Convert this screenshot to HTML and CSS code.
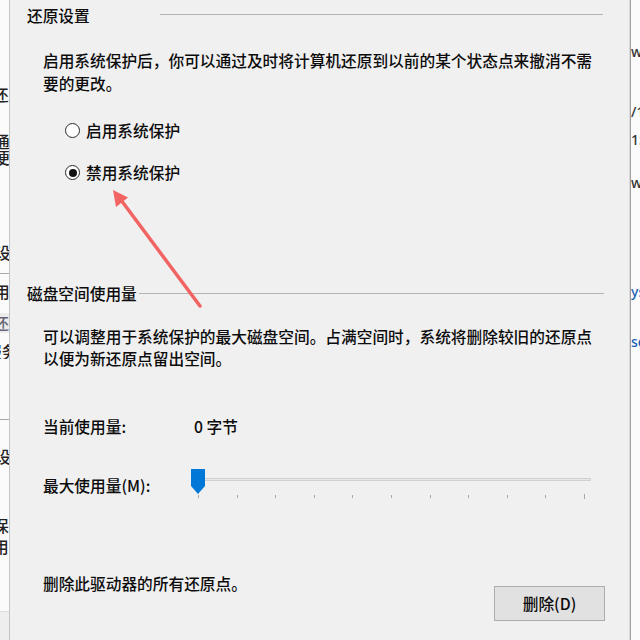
FILE: index.html
```html
<!DOCTYPE html>
<html lang="zh-CN">
<head>
<meta charset="utf-8">
<title>系统保护</title>
<link rel="stylesheet" href="styles.css">
</head>
<body>
<div class="screen">
  <div class="bg-left">
    <div class="frag fl1"><span>还原</span></div>
    <div class="frag fl2"><span>通</span></div>
    <div class="frag fl3"><span>便</span></div>
    <div class="frag fl4"><span>设置</span></div>
    <div class="hline hl1"></div>
    <div class="frag fl5"><span>用</span></div>
    <div class="gbox"><span>还</span></div>
    <div class="frag fl6"><span>服务</span></div>
    <div class="hline hl2"></div>
    <div class="frag fl7"><span>设置</span></div>
    <div class="frag fl8"><span>保创</span></div>
    <div class="frag fl9"><span>用创</span></div>
    <div class="band"></div>
  </div>

  <div class="dialog">
    <section class="group">
      <div class="group-head">
        <span class="group-title">还原设置</span>
        <span class="rule rule-1"></span>
      </div>
      <p class="desc">
        <span class="line">启用系统保护后，你可以通过及时将计算机还原到以前的某个状态点来撤消不需</span>
        <span class="line">要的更改。</span>
      </p>
      <div class="radio radio-1"><span class="circle"></span>启用系统保护</div>
      <div class="radio radio-2"><span class="circle checked"></span>禁用系统保护</div>
    </section>

    <section class="group group-2">
      <div class="group-head">
        <span class="group-title">磁盘空间使用量</span>
        <span class="rule rule-2"></span>
      </div>
      <p class="desc desc-2">
        <span class="line">可以调整用于系统保护的最大磁盘空间。占满空间时，系统将删除较旧的还原点</span>
        <span class="line">以便为新还原点留出空间。</span>
      </p>
      <div class="field usage">
        <span class="label">当前使用量:</span>
        <span class="value">0 字节</span>
      </div>
      <div class="field max">
        <span class="label">最大使用量(M):</span>
        <div class="slider">
          <div class="track"></div>
          <div class="ticks">
            <i></i><i></i><i></i><i></i><i></i><i></i><i></i><i></i><i></i><i></i><i class="end"></i>
          </div>
          <div class="thumb"></div>
        </div>
      </div>
      <div class="delete-row">
        <span class="delete-text">删除此驱动器的所有还原点。</span>
        <button class="btn" type="button">删除(D)</button>
      </div>
    </section>
  </div>

  <div class="bg-right">
    <div class="rfrag fr1">w</div>
    <div class="rfrag fr2">/1</div>
    <div class="rfrag fr3">15</div>
    <div class="rfrag fr4">w</div>
    <div class="rfrag fr5 link">ys</div>
    <div class="rfrag fr6 link">se</div>
  </div>

  <svg class="arrow" width="640" height="640" viewBox="0 0 640 640" aria-hidden="true">
    <line x1="200" y1="306" x2="121" y2="200" stroke="#f26464" stroke-width="3.5" stroke-linecap="round"/>
    <polygon points="113,190 128,197.5 116,207" fill="#f26464"/>
  </svg>
</div>
</body>
</html>
```
FILE: styles.css
```css
html, body {
  margin: 0;
  padding: 0;
}
body {
  width: 640px;
  height: 640px;
  overflow: hidden;
  background: #fafafa;
  font-family: "Noto Sans CJK SC", "Noto Sans", sans-serif;
  font-size: 15.7px;
  font-weight: 500;
  line-height: 23px;
  color: #0c0c0c;
}
.screen {
  position: relative;
  display: flex;
  width: 640px;
  height: 640px;
}

/* background window fragments, left */
.bg-left {
  flex: none;
  width: 9px;
  height: 640px;
  overflow: hidden;
  background: #fbfbfb;
  display: flex;
  flex-direction: column;
}
.frag {
  height: 16px;
  line-height: 16px;
  white-space: nowrap;
  overflow: hidden;
  font-size: 15.7px;
  color: #222;
}
.fl1 { margin-top: 87px; text-indent: -7px; }
.fl2 { margin-top: 31px; text-indent: -6px; }
.fl3 { margin-top: 0; text-indent: -6px; }
.fl4 { margin-top: 79px; text-indent: -5px; }
.hline { height: 1px; background: #a8a8a8; }
.hl1 { margin-top: 12px; }
.fl5 { margin-top: 10px; text-indent: -6px; }
.gbox {
  margin-top: 13px;
  height: 20px;
  line-height: 20px;
  background: #ececec;
  color: #667;
  font-size: 15px;
  white-space: nowrap;
  overflow: hidden;
  text-indent: -6px;
}
.fl6 { margin-top: 11px; text-indent: -14px; }
.hl2 { margin-top: 60px; }
.fl7 { margin-top: 29px; text-indent: -5px; }
.fl8 { margin-top: 53px; text-indent: -7px; }
.fl9 { margin-top: 5px; text-indent: -7px; }
.band {
  margin-top: 56px;
  height: 28px;
  background: #eeeeee;
  border-top: 1px solid #dcdcdc;
}

/* background window fragments, right */
.bg-right {
  flex: none;
  width: 9px;
  height: 640px;
  overflow: hidden;
  background: #fbfbfb;
  display: flex;
  flex-direction: column;
}
.rfrag {
  height: 16px;
  line-height: 16px;
  font-family: "Noto Sans", sans-serif;
  font-size: 14px;
  color: #333;
  white-space: nowrap;
}
.rfrag.link { color: #1a5fb4; }
.fr1 { margin-top: 44px; }
.fr2 { margin-top: 44px; }
.fr3 { margin-top: 12px; }
.fr4 { margin-top: 27px; }
.fr5 { margin-top: 93px; }
.fr6 { margin-top: 34px; }

/* dialog */
.dialog {
  flex: none;
  width: 622px;
  height: 640px;
  box-sizing: border-box;
  background: #f0f0f0;
  border-left: 1px solid #c4c4c4;
  border-right: 1px solid #a0a0a0;
  box-shadow: inset -1px 0 0 #dadada;
  padding: 4px 25px 0 17px;
}
.group-head {
  display: flex;
  align-items: center;
  height: 23px;
}
.group-title {
  white-space: nowrap;
}
.rule {
  flex: 1;
  height: 1px;
  background: #b4b4b4;
}
.rule-1 { margin-left: 70px; margin-right: 2px; margin-top: -2px; }
.rule-2 { margin-left: 2px; margin-right: 1px; }

.desc {
  margin: 22px 0 0 16px;
}
.desc .line {
  display: block;
  white-space: nowrap;
}
.desc-2 {
  margin-top: 21px;
  line-height: 22px;
}

.radio {
  display: flex;
  align-items: center;
  height: 23px;
  margin-left: 38px;
}
.radio-1 { margin-top: 24px; }
.radio-2 { margin-top: 19px; }
.circle {
  flex: none;
  width: 15px;
  height: 15px;
  box-sizing: border-box;
  border: 1px solid #2a2a2a;
  border-radius: 50%;
  background: #fff;
  margin-right: 6px;
  display: flex;
  align-items: center;
  justify-content: center;
}
.circle.checked::after {
  content: "";
  width: 8px;
  height: 8px;
  border-radius: 50%;
  background: #111;
}

.group-2 {
  margin-top: 98px;
}

.field {
  display: flex;
  margin-left: 16px;
  align-items: flex-start;
}
.usage { margin-top: 45px; height: 23px; }
.usage .label { width: 151px; }
.max { margin-top: 36px; }
.max .label { width: 148px; }

.slider {
  position: relative;
  width: 401px;
  height: 30px;
  margin-top: -5px;
}
.track {
  margin: 9px 0 0 2px;
  width: 398px;
  height: 3px;
  box-sizing: border-box;
  background: #e7e7e7;
  border: 1px solid #d0d0d0;
}
.ticks {
  display: flex;
  justify-content: space-between;
  align-items: flex-start;
  margin: 14px 0 0 7px;
  width: 387px;
}
.ticks i {
  display: block;
  width: 1px;
  height: 3px;
  background: #a8a8a8;
}
.ticks i.end {
  height: 5px;
  margin-top: -1px;
}
.thumb {
  position: absolute;
  left: 0;
  top: 0;
  width: 14px;
  height: 25px;
  background: #0078d7;
  clip-path: polygon(0 0, 100% 0, 100% 68%, 50% 100%, 0 68%);
}

.delete-row {
  display: flex;
  justify-content: space-between;
  align-items: flex-start;
  margin: 73px 0 0 16px;
}
.btn {
  margin-top: 14px;
  width: 111px;
  height: 35px;
  box-sizing: border-box;
  background: #e1e1e1;
  border: 1px solid #adadad;
  border-radius: 0;
  font-family: inherit;
  font-size: 15.7px;
  font-weight: 500;
  color: #0c0c0c;
  padding: 0;
}

.arrow {
  position: absolute;
  left: 0;
  top: 0;
  pointer-events: none;
}
```
